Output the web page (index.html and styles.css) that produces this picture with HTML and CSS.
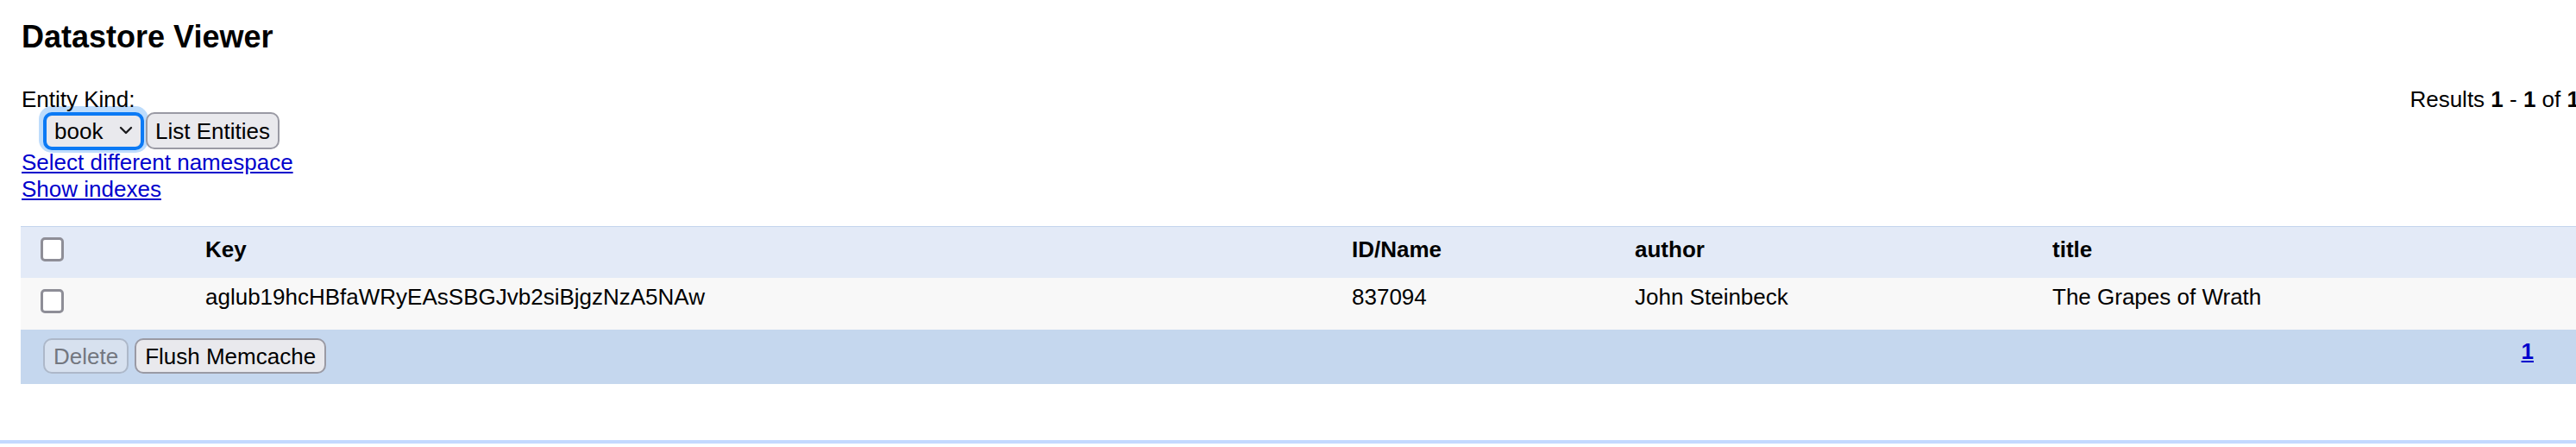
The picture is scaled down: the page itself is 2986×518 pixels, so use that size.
FILE: index.html
```html
<!DOCTYPE html>
<html lang="en">
<head>
<meta charset="utf-8">
<title>Datastore Viewer</title>
<link rel="stylesheet" href="styles.css">
</head>
<body>
<div class="page">
  <h1 class="title">Datastore Viewer</h1>
  <form class="search" onsubmit="return false">
    <div class="kind-line">
      <span class="label">Entity Kind:</span>
      <span class="results">Results <b>1</b> - <b>1</b> of <b>1</b></span>
    </div>
    <div class="controls">
      <span class="select-wrap">
        <select class="kind-select" name="kind"><option>book</option></select>
        <svg class="chevron" width="16" height="10" viewBox="0 0 16 10" aria-hidden="true"><path d="M2 2 L8 8 L14 2" fill="none" stroke="#1c1c1e" stroke-width="2.4" stroke-linecap="round" stroke-linejoin="round"/></svg>
      </span>
      <button type="button" class="btn">List Entities</button>
    </div>
  </form>
  <div class="links">
    <a href="#">Select different namespace</a>
    <a href="#">Show indexes</a>
  </div>
  <table class="entities">
    <thead>
      <tr class="head-row">
        <th class="c-check"><input type="checkbox" class="cb"></th>
        <th class="c-key">Key</th>
        <th class="c-id">ID/Name</th>
        <th class="c-author">author</th>
        <th class="c-title">title</th>
      </tr>
    </thead>
    <tbody>
      <tr class="data-row">
        <td><input type="checkbox" class="cb"></td>
        <td>aglub19hcHBfaWRyEAsSBGJvb2siBjgzNzA5NAw</td>
        <td>837094</td>
        <td>John Steinbeck</td>
        <td>The Grapes of Wrath</td>
      </tr>
    </tbody>
    <tfoot>
      <tr class="foot-row">
        <td colspan="5">
          <div class="foot-inner">
            <div class="actions">
              <button type="button" class="btn btn-small" disabled>Delete</button>
              <button type="button" class="btn btn-small">Flush Memcache</button>
            </div>
            <a href="#" class="pager">1</a>
          </div>
        </td>
      </tr>
    </tfoot>
  </table>
</div>
<div class="page-foot"></div>
</body>
</html>
```
FILE: styles.css
```css
html {
  overflow: hidden;
}

body {
  margin: 0;
  background: #fff;
  color: #000;
  font-family: "Liberation Sans", Arial, sans-serif;
  font-size: 26px;
  line-height: 30px;
}

.page {
  width: 2966px;
  padding-left: 24px;
}

.title {
  margin: 22px 0 0 1px;
  font-size: 36px;
  line-height: 42px;
  font-weight: bold;
}

.search {
  margin: 0;
}

.kind-line {
  position: relative;
  z-index: 1;
  margin-top: 36px;
  display: flex;
  justify-content: space-between;
  line-height: 30px;
  padding-left: 1px;
}

.controls {
  display: flex;
  align-items: flex-start;
  height: 43px;
  padding-left: 26px;
}

.select-wrap {
  position: relative;
  display: inline-block;
}

.kind-select {
  appearance: none;
  -webkit-appearance: none;
  display: block;
  box-sizing: border-box;
  width: 117px;
  height: 44px;
  margin: 0;
  padding: 0 0 0 9px;
  border: 4px solid #0b7af5;
  border-radius: 10px;
  background: #e9e9ed;
  box-shadow: 0 -2px 0 5px #bddcfc;
  color: #000;
  font-family: inherit;
  font-size: 26px;
  outline: none;
}

.chevron {
  position: absolute;
  left: 88px;
  top: 16px;
  pointer-events: none;
}

.btn {
  box-sizing: border-box;
  height: 43px;
  margin: 0 0 0 2px;
  padding: 0 9px;
  border: 2px solid #9a9aa4;
  border-radius: 10px;
  background: #e9e9ed;
  color: #000;
  font-family: inherit;
  font-size: 26px;
  line-height: 30px;
  position: relative;
}

.links {
  position: relative;
  z-index: 1;
  line-height: 31px;
  padding-left: 1px;
}

.links a {
  display: block;
  width: max-content;
  color: #00c;
}

.entities {
  margin-top: 27px;
  width: 100%;
  table-layout: fixed;
  border-collapse: separate;
  border-spacing: 0;
  border-top: 1px solid #c4d5ed;
}

.entities th,
.entities td {
  padding: 0 0 0 23px;
  text-align: left;
  vertical-align: top;
  font-size: 26px;
  line-height: 30px;
  white-space: nowrap;
}

.c-check { width: 168px; }
.c-key { width: 1306px; }
.c-id { width: 305px; }
.c-author { width: 461px; }

.head-row {
  height: 59px;
  background: #e3eaf7;
}

.head-row th {
  padding-top: 11px;
  font-weight: bold;
}

.data-row {
  height: 60px;
  background: #f8f8f8;
}

.data-row td {
  padding-top: 7px;
}

.cb {
  appearance: none;
  -webkit-appearance: none;
  display: block;
  box-sizing: border-box;
  width: 27px;
  height: 28px;
  margin: 1px 0 0 0;
  border: 3px solid #8e8e97;
  border-radius: 5px;
  background: #fff;
}

.data-row .cb {
  margin-top: 6px;
}

.foot-row {
  height: 63px;
  background: #c5d7ee;
}

.foot-row td {
  padding: 10px 53px 0 26px;
}

.foot-inner {
  display: flex;
  justify-content: space-between;
  align-items: flex-start;
}

.actions {
  display: flex;
  gap: 7px;
}

.btn-small {
  height: 41px;
  margin: 0;
  padding: 0 10px;
}

.btn-small:disabled {
  background: #d7e1ef;
  border-color: #adb8c9;
  color: #73777f;
}

.pager {
  color: #00c;
  font-weight: bold;
  line-height: 30px;
}

.page-foot {
  margin-top: 65px;
  height: 4px;
  background: #c3d9ff;
}
```
